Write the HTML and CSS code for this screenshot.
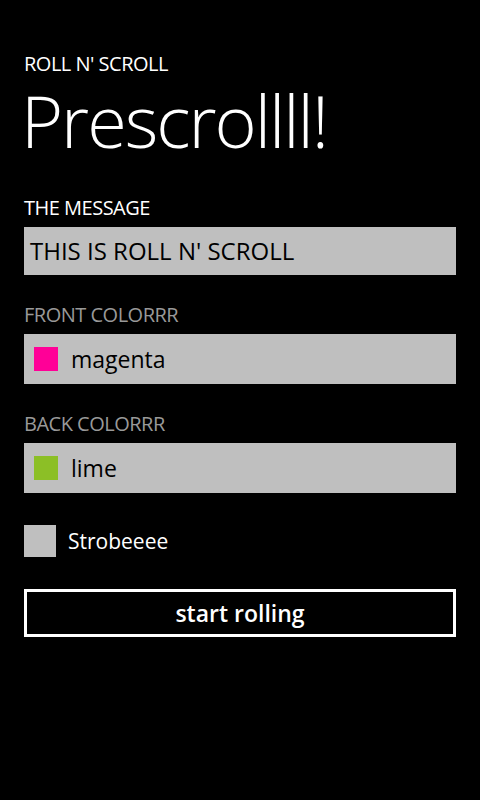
FILE: index.html
```html
<!DOCTYPE html>
<html>
<head>
<meta charset="utf-8">
<link rel="stylesheet" href="styles.css">
</head>
<body>
<div class="page">
  <div class="app-title">ROLL N' SCROLL</div>
  <div class="page-title">Prescrollll!</div>

  <div class="field-label">THE MESSAGE</div>
  <div class="textbox">THIS IS ROLL N' SCROLL</div>

  <div class="field-label subtle label-front">FRONT COLORRR</div>
  <div class="picker">
    <span class="swatch magenta"></span>
    <span class="picker-text">magenta</span>
  </div>

  <div class="field-label subtle label-back">BACK COLORRR</div>
  <div class="picker">
    <span class="swatch lime"></span>
    <span class="picker-text">lime</span>
  </div>

  <div class="check-row">
    <span class="checkbox"></span>
    <span class="check-text">Strobeeee</span>
  </div>

  <div class="button">start rolling</div>
</div>
</body>
</html>
```

FILE: styles.css
```css
html, body {
  margin: 0;
  padding: 0;
  background: #000;
  width: 480px;
  height: 800px;
  overflow: hidden;
}
.page {
  padding: 52px 24px 0 24px;
  font-family: "Open Sans", "Noto Sans", sans-serif;
  color: #fff;
  display: flex;
  flex-direction: column;
}
.app-title {
  font-size: 20px;
  letter-spacing: -0.5px;
  line-height: 24px;
  height: 24px;
}
.page-title {
  font-size: 72px;
  font-weight: 300;
  line-height: 76px;
  letter-spacing: -2px;
  margin-left: -3px;
  margin-top: 6px;
  height: 76px;
}
.field-label {
  font-size: 20px;
  letter-spacing: -0.5px;
  line-height: 28px;
  height: 28px;
  margin-top: 36px;
}
.field-label.subtle {
  color: #999;
}
.label-front {
  margin-top: 26px;
}
.label-back {
  margin-top: 26px;
}
.textbox {
  margin-top: 5px;
  height: 48px;
  background: #bfbfbf;
  color: #000;
  font-size: 24px;
  line-height: 48px;
  padding-left: 6px;
}
.picker {
  margin-top: 5px;
  height: 50px;
  background: #bfbfbf;
  display: flex;
  align-items: center;
  padding-left: 10px;
}
.swatch {
  width: 24px;
  height: 24px;
  flex: none;
}
.swatch.magenta { background: #ff0097; }
.swatch.lime { background: #8cbf26; }
.picker-text {
  color: #000;
  font-size: 23px;
  margin-left: 13px;
  line-height: 50px;
}
.check-row {
  margin-top: 32px;
  display: flex;
  align-items: center;
  height: 32px;
}
.checkbox {
  width: 32px;
  height: 32px;
  background: #bfbfbf;
  flex: none;
}
.check-text {
  margin-left: 12px;
  font-size: 21px;
  line-height: 32px;
}
.button {
  margin-top: 32px;
  height: 42px;
  border: 3px solid #fff;
  text-align: center;
  font-size: 23px;
  font-weight: 600;
  line-height: 42px;
}
```
